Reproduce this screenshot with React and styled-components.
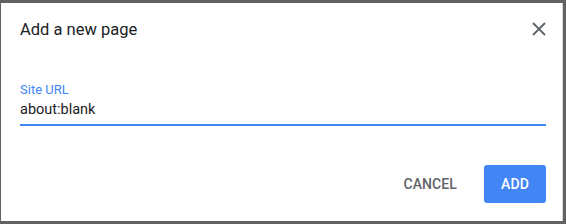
import React from 'react';
import styled, { createGlobalStyle } from 'styled-components';

const GlobalStyle = createGlobalStyle`
  html, body {
    margin: 0;
    padding: 0;
    background: #626262;
    font-family: Roboto, "Liberation Sans", Arial, sans-serif;
  }
`;

const Dialog = styled.div`
  box-sizing: border-box;
  width: 562px;
  height: 218px;
  margin: 3px 3px 3px 1px;
  background: #fff;
  border-right: 1px solid #d8d8d8;
  display: flex;
  flex-direction: column;
  padding: 0 16px 0 19px;
`;

const Header = styled.div`
  display: flex;
  align-items: center;
  justify-content: space-between;
  height: 50px;
  padding-top: 1px;
`;

const Title = styled.h1`
  margin: 0;
  font-size: 16.5px;
  font-weight: 400;
  color: #202124;
`;

const CloseButton = styled.button`
  border: 0;
  background: none;
  padding: 0;
  margin-right: -3px;
  width: 20px;
  height: 20px;
  display: flex;
  align-items: center;
  justify-content: center;
  cursor: pointer;
`;

const Field = styled.div`
  margin-top: 28px;
  display: flex;
  flex-direction: column;
`;

const Label = styled.label`
  font-size: 13px;
  color: #4285f4;
  line-height: 15px;
`;

const Input = styled.input`
  border: 0;
  border-bottom: 2px solid #4285f4;
  outline: none;
  font-family: inherit;
  font-size: 14.5px;
  color: #202124;
  padding: 4px 0 6px 0;
  margin: 0;
  width: 100%;
  box-sizing: border-box;
  caret-color: #202124;
`;

const Actions = styled.div`
  margin-top: auto;
  margin-bottom: 18px;
  display: flex;
  justify-content: flex-end;
  align-items: center;
  gap: 10px;
`;

const Button = styled.button`
  border: 0;
  border-radius: 3px;
  font-family: inherit;
  font-size: 14px;
  font-weight: 500;
  letter-spacing: 0.1px;
  height: 38px;
  padding: 0 17px;
  min-width: ${(p) => (p.primary ? '62px' : '0')};
  background: ${(p) => (p.primary ? '#4285f4' : 'transparent')};
  color: ${(p) => (p.primary ? '#fff' : '#5f6368')};
  cursor: pointer;
`;

const App = () => {
  return (
    <>
      <GlobalStyle />
      <Dialog>
        <Header>
          <Title>Add a new page</Title>
          <CloseButton aria-label="Close">
            <svg width="14" height="14" viewBox="0 0 14 14">
              <path d="M1 1 L13 13 M13 1 L1 13" stroke="#5f6368" strokeWidth="1.8" />
            </svg>
          </CloseButton>
        </Header>
        <Field>
          <Label>Site URL</Label>
          <Input defaultValue="about:blank" autoFocus />
        </Field>
        <Actions>
          <Button>CANCEL</Button>
          <Button primary>ADD</Button>
        </Actions>
      </Dialog>
    </>
  );
};

export default App;
